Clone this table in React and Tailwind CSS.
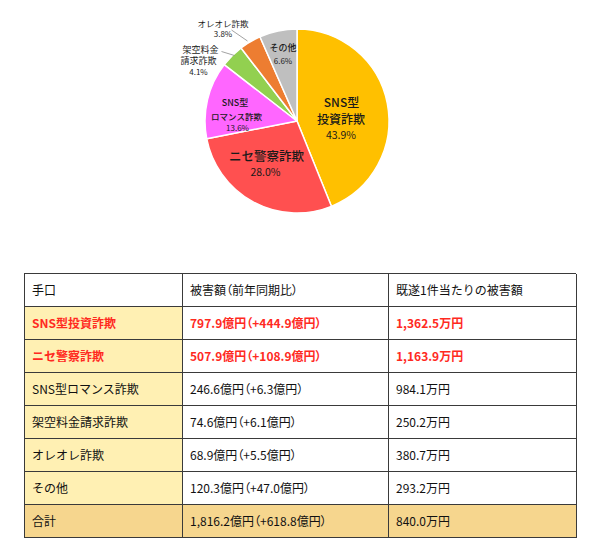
import React from "react";

const CX = 297;
const CY = 121;
const R = 92;

const slices = [
  { v: 43.9, c: "#FFC000" },
  { v: 28.0, c: "#FF5050" },
  { v: 13.6, c: "#FF66FF" },
  { v: 4.1, c: "#92D050" },
  { v: 3.8, c: "#ED7D31" },
  { v: 6.6, c: "#BFBFBF" },
];

function pt(a) {
  const rad = (a * Math.PI) / 180;
  return [CX + R * Math.sin(rad), CY - R * Math.cos(rad)];
}

function Pie() {
  let start = 0;
  const paths = slices.map((s, i) => {
    const end = start + (s.v / 100) * 360;
    const [x1, y1] = pt(start);
    const [x2, y2] = pt(end);
    const large = end - start > 180 ? 1 : 0;
    const d = `M${CX},${CY} L${x1},${y1} A${R},${R} 0 ${large} 1 ${x2},${y2} Z`;
    start = end;
    return <path key={i} d={d} fill={s.c} stroke="#ffffff" strokeWidth="1.5" strokeLinejoin="round" />;
  });
  const f = { fontFamily: '"Noto Sans CJK JP", "Noto Sans", sans-serif' };
  const T = ({ x, y, s, w = 400, children }) => (
    <text x={x} y={y} fontSize={s} fontWeight={w} textAnchor="middle" dominantBaseline="central" fill="#1a1a1a" style={f}>
      {children}
    </text>
  );
  return (
    <svg width="600" height="220" viewBox="0 0 600 220" className="block">
      {paths}
      <line x1="231.5" y1="30" x2="247.5" y2="41" stroke="#8a8a8a" strokeWidth="0.8" />
      <line x1="221.5" y1="51.5" x2="234.5" y2="55.5" stroke="#8a8a8a" strokeWidth="0.8" />
      <T x={341.5} y={101.5} s={12} w={500}>SNS型</T>
      <T x={341} y={118} s={12} w={500}>投資詐欺</T>
      <T x={341} y={134} s={10.5}>43.9%</T>
      <T x={266.5} y={155} s={12.5} w={500}>ニセ警察詐欺</T>
      <T x={265.5} y={171} s={10.5}>28.0%</T>
      <T x={235} y={102.5} s={9} w={500}>SNS型</T>
      <T x={236.5} y={115.5} s={8.5} w={500}>ロマンス詐欺</T>
      <T x={237.5} y={127} s={8}>13.6%</T>
      <T x={283} y={47.5} s={9} w={500}>その他</T>
      <T x={283} y={60} s={8}>6.6%</T>
      <T x={223} y={22.5} s={8.5}>オレオレ詐欺</T>
      <T x={223} y={33.5} s={8}>3.8%</T>
      <T x={200.5} y={49} s={9}>架空料金</T>
      <T x={198.5} y={60.5} s={9}>請求詐欺</T>
      <T x={198.5} y={71} s={8}>4.1%</T>
    </svg>
  );
}

const rows = [
  { a: "SNS型投資詐欺", b: "797.9億円（+444.9億円）", c: "1,362.5万円", red: true },
  { a: "ニセ警察詐欺", b: "507.9億円（+108.9億円）", c: "1,163.9万円", red: true },
  { a: "SNS型ロマンス詐欺", b: "246.6億円（+6.3億円）", c: "984.1万円" },
  { a: "架空料金請求詐欺", b: "74.6億円（+6.1億円）", c: "250.2万円" },
  { a: "オレオレ詐欺", b: "68.9億円（+5.5億円）", c: "380.7万円" },
  { a: "その他", b: "120.3億円（+47.0億円）", c: "293.2万円" },
];

function P({ text }) {
  const parts = text.split(/([（）])/);
  return parts.map((p, i) =>
    p === "（" || p === "）" ? (
      <span key={i} className="[font-feature-settings:'palt']">
        {p}
      </span>
    ) : (
      <React.Fragment key={i}>{p}</React.Fragment>
    )
  );
}

function Cell({ children, className = "" }) {
  return (
    <div className={`h-[33px] flex items-center pl-[7px] border-r border-b border-[#3a3a3a] whitespace-nowrap ${className}`}>
      {children}
    </div>
  );
}

export default function App() {
  return (
    <div
      className="w-[600px] h-[554px] bg-white overflow-hidden"
      style={{ fontFamily: '"Noto Sans CJK JP", "Noto Sans", sans-serif' }}
    >
      <Pie />
      <div className="ml-[24px] mt-[53px] w-[552px] grid grid-cols-[158px_206px_188px] border-l border-t border-[#3a3a3a] text-[12px] text-[#111]">
        <Cell>手口</Cell>
        <Cell><P text="被害額（前年同期比）" /></Cell>
        <Cell>既遂1件当たりの被害額</Cell>
        {rows.map((r, i) => {
          const t = r.red ? "text-[#ff2a1f] font-bold" : "";
          return (
            <React.Fragment key={i}>
              <Cell className={`bg-[#fff0b3] ${t}`}>{r.a}</Cell>
              <Cell className={t}><P text={r.b} /></Cell>
              <Cell className={t}>{r.c}</Cell>
            </React.Fragment>
          );
        })}
        <Cell className="bg-[#f6d68e]">合計</Cell>
        <Cell className="bg-[#f6d68e]"><P text="1,816.2億円（+618.8億円）" /></Cell>
        <Cell className="bg-[#f6d68e]">840.0万円</Cell>
      </div>
    </div>
  );
}
